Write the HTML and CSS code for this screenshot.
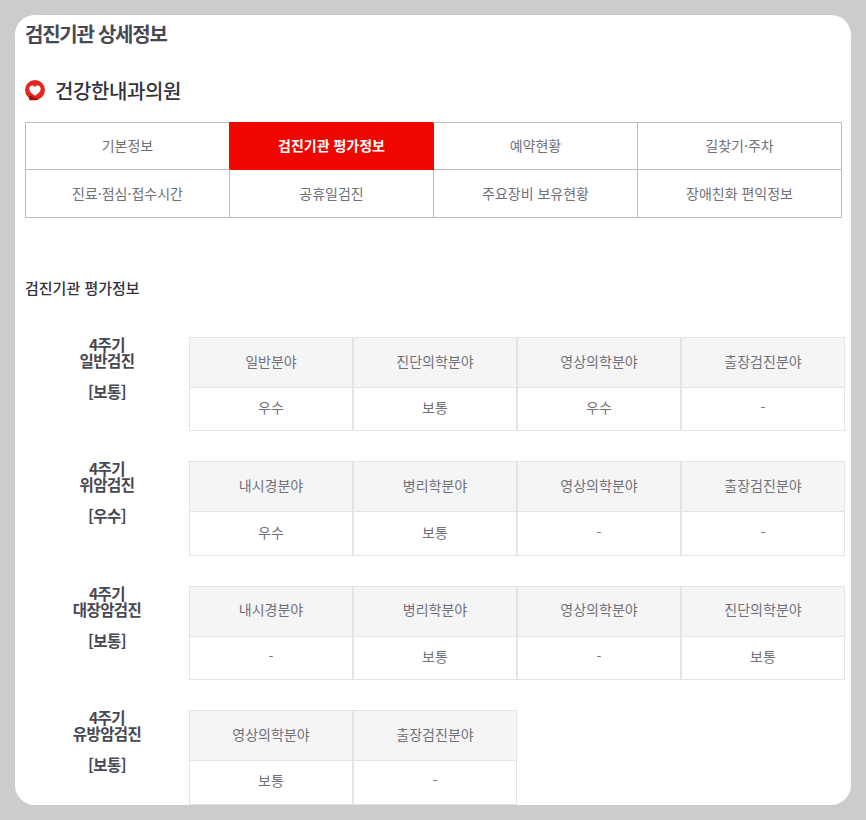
FILE: index.html
```html
<!DOCTYPE html>
<html lang="ko">
<head>
<meta charset="utf-8">
<title>검진기관 상세정보</title>
<link rel="stylesheet" href="styles.css">
</head>
<body>
<main class="card">
  <h1 class="title">검진기관 상세정보</h1>
  <h2 class="clinic">
    <svg class="clinic-icon" viewBox="0 0 20 21" width="20" height="21" aria-hidden="true">
      <circle cx="10" cy="10" r="10" fill="#e0281f"/>
      <path d="M4 15.500v3.200c0 1 .6 1.500 1.600 1.500h4.400c1.500 0 2.800-.4 3.600-1z" fill="#a30f14"/>
      <path d="M10 15.800C6.600 13.600 4.300 11.500 4.300 8.800c0-1.900 1.400-3.200 3-3.200 1.200 0 2.200.6 2.700 1.500.5-.9 1.500-1.500 2.700-1.500 1.600 0 3 1.300 3 3.200 0 2.700-2.300 4.800-5.700 7z" fill="#fff"/>
    </svg>
    건강한내과의원
  </h2>
  <nav class="tabs">
    <a class="tab tab-top">기본정보</a>
    <a class="tab tab-top tab-active">검진기관 평가정보</a>
    <a class="tab tab-top">예약현황</a>
    <a class="tab tab-top">길찾기·주차</a>
    <a class="tab">진료·점심·접수시간</a>
    <a class="tab">공휴일검진</a>
    <a class="tab">주요장비 보유현황</a>
    <a class="tab">장애친화 편익정보</a>
  </nav>
  <h3 class="section-title">검진기관 평가정보</h3>
  <div class="groups">
    <section class="group">
      <div class="group-label">4주기<br>일반검진<span class="grade">[보통]</span></div>
      <div class="grid">
        <div class="head">일반분야</div><div class="head">진단의학분야</div><div class="head">영상의학분야</div><div class="head">출장검진분야</div>
        <div class="val">우수</div><div class="val">보통</div><div class="val">우수</div><div class="val">-</div>
      </div>
    </section>
    <section class="group">
      <div class="group-label">4주기<br>위암검진<span class="grade">[우수]</span></div>
      <div class="grid">
        <div class="head">내시경분야</div><div class="head">병리학분야</div><div class="head">영상의학분야</div><div class="head">출장검진분야</div>
        <div class="val">우수</div><div class="val">보통</div><div class="val">-</div><div class="val">-</div>
      </div>
    </section>
    <section class="group">
      <div class="group-label">4주기<br>대장암검진<span class="grade">[보통]</span></div>
      <div class="grid">
        <div class="head">내시경분야</div><div class="head">병리학분야</div><div class="head">영상의학분야</div><div class="head">진단의학분야</div>
        <div class="val">-</div><div class="val">보통</div><div class="val">-</div><div class="val">보통</div>
      </div>
    </section>
    <section class="group">
      <div class="group-label">4주기<br>유방암검진<span class="grade">[보통]</span></div>
      <div class="grid grid-two">
        <div class="head">영상의학분야</div><div class="head">출장검진분야</div>
        <div class="val">보통</div><div class="val">-</div>
      </div>
    </section>
  </div>
</main>
</body>
</html>
```
FILE: styles.css
```css
* { box-sizing: border-box; }
html, body { margin: 0; height: 820px; overflow: hidden; }
body {
  background: #cccccc;
  padding: 15px;
  font-family: "Noto Sans CJK KR", "Noto Sans", sans-serif;
  color: #333340;
}
.card {
  width: 836px;
  height: 790px;
  background: #fff;
  border-radius: 20px;
  padding: 0 0 0 10px;
}
.title {
  margin: 0;
  padding-top: 4px;
  font-size: 20px;
  line-height: 29px;
  font-weight: 700;
  letter-spacing: -1.25px;
  color: #484854;
}
.clinic {
  display: flex;
  align-items: center;
  gap: 10px;
  margin: 24px 0 0;
  height: 36px;
  font-size: 20px;
  font-weight: 500;
  letter-spacing: -0.4px;
}
.clinic-icon { flex: none; }
.tabs {
  display: grid;
  grid-template-columns: repeat(4, 204px);
  width: 817px;
  margin-top: 14px;
  border: 1px solid #bdbdbd;
  border-width: 1px 0 0 1px;
}
.tab {
  display: flex;
  align-items: center;
  justify-content: center;
  height: 48px;
  padding-bottom: 2px;
  border: 1px solid #bdbdbd;
  border-width: 0 1px 1px 0;
  font-size: 14px;
  color: #707078;
}
.tab-top { height: 47px; }
.tab-active {
  background: #f00600;
  border-color: #f00600;
  box-shadow: -1px -1px 0 #f00600;
  color: #fff;
  font-weight: 700;
}
.section-title {
  margin: 59px 0 0;
  font-size: 15px;
  line-height: 22px;
  font-weight: 500;
}
.groups {
  display: flex;
  flex-direction: column;
  gap: 30px;
  margin-top: 38px;
}
.group {
  display: flex;
  height: 94.4px;
}
.group-label {
  width: 164px;
  flex: none;
  margin-top: -1px;
  text-align: center;
  font-size: 15.5px;
  line-height: 16px;
  font-weight: 700;
  letter-spacing: -0.55px;
  color: #484854;
}
.grade {
  display: block;
  margin-top: 15px;
}
.grid {
  display: grid;
  grid-template-columns: repeat(4, 164px);
  grid-template-rows: 51px 43.4px;
  flex: none;
}
.grid-two { grid-template-columns: repeat(2, 164px); }
.head, .val {
  display: flex;
  align-items: center;
  justify-content: center;
  padding-bottom: 4px;
  font-size: 14px;
  color: #707078;
  border: 1px solid #e4e4e6;
  border-top-width: 0;
}
.head {
  background: #f5f5f5;
  border-top-width: 1px;
}
```
